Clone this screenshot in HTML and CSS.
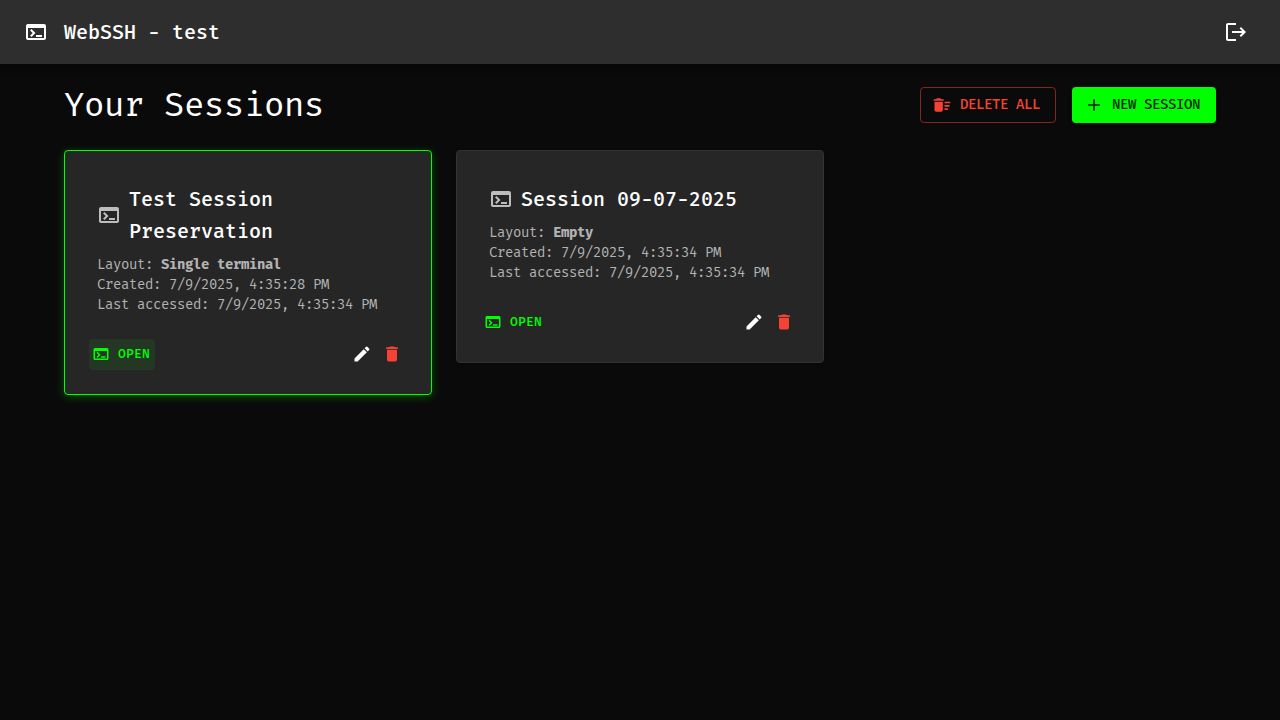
FILE: index.html
```html
<!DOCTYPE html>
<html lang="en">
<head>
<meta charset="utf-8">
<title>WebSSH</title>
<link rel="stylesheet" href="styles.css">
</head>
<body>
<svg class="defs">
  <symbol id="terminal" viewBox="0 0 24 24"><path d="M20 4H4c-1.11 0-2 .9-2 2v12c0 1.1.89 2 2 2h16c1.1 0 2-.9 2-2V6c0-1.1-.89-2-2-2m0 14H4V8h16zm-2-1h-6v-2h6zM7.5 17l-1.41-1.41L8.67 13l-2.59-2.59L7.5 9l4 4z"/></symbol>
  <symbol id="logout" viewBox="0 0 24 24"><path d="m17 7-1.41 1.41L18.17 11H8v2h10.17l-2.58 2.58L17 17l5-5zM4 5h8V3H4c-1.1 0-2 .9-2 2v14c0 1.1.9 2 2 2h8v-2H4z"/></symbol>
  <symbol id="sweep" viewBox="0 0 24 24"><path d="M15 16h4v2h-4zm0-8h7v2h-7zm0 4h6v2h-6zM3 18c0 1.1.9 2 2 2h6c1.1 0 2-.9 2-2V8H3zM14 5h-3l-1-1H6L5 5H2v2h12z"/></symbol>
  <symbol id="add" viewBox="0 0 24 24"><path d="M19 13h-6v6h-2v-6H5v-2h6V5h2v6h6z"/></symbol>
  <symbol id="edit" viewBox="0 0 24 24"><path d="M3 17.25V21h3.75L17.81 9.94l-3.75-3.75zM20.71 7.04c.39-.39.39-1.02 0-1.41l-2.34-2.34a.9959.9959 0 0 0-1.41 0l-1.83 1.83 3.75 3.75z"/></symbol>
  <symbol id="delete" viewBox="0 0 24 24"><path d="M6 19c0 1.1.9 2 2 2h8c1.1 0 2-.9 2-2V7H6zM19 4h-3.5l-1-1h-5l-1 1H5v2h14z"/></symbol>
</svg>
<header class="appbar">
  <svg class="icon"><use href="#terminal"/></svg>
  <div class="brand">WebSSH - test</div>
  <svg class="icon logout"><use href="#logout"/></svg>
</header>
<main class="main">
  <div class="heading">
    <h1 class="page-title">Your Sessions</h1>
    <button class="btn btn-outline"><svg class="icon"><use href="#sweep"/></svg><span>DELETE ALL</span></button>
    <button class="btn btn-solid"><svg class="icon"><use href="#add"/></svg><span>NEW SESSION</span></button>
  </div>
  <div class="grid">
    <article class="card active">
      <div class="card-title"><svg class="icon"><use href="#terminal"/></svg><h2 class="name">Test Session Preservation</h2></div>
      <div class="meta">
        <div>Layout: <strong>Single terminal</strong></div>
        <div>Created: 7/9/2025, 4:35:28 PM</div>
        <div>Last accessed: 7/9/2025, 4:35:34 PM</div>
      </div>
      <div class="actions">
        <button class="open"><svg class="icon"><use href="#terminal"/></svg><span>OPEN</span></button>
        <button class="tool"><svg class="icon"><use href="#edit"/></svg></button>
        <button class="tool danger"><svg class="icon"><use href="#delete"/></svg></button>
      </div>
    </article>
    <article class="card">
      <div class="card-title"><svg class="icon"><use href="#terminal"/></svg><h2 class="name">Session 09-07-2025</h2></div>
      <div class="meta">
        <div>Layout: <strong>Empty</strong></div>
        <div>Created: 7/9/2025, 4:35:34 PM</div>
        <div>Last accessed: 7/9/2025, 4:35:34 PM</div>
      </div>
      <div class="actions">
        <button class="open"><svg class="icon"><use href="#terminal"/></svg><span>OPEN</span></button>
        <button class="tool"><svg class="icon"><use href="#edit"/></svg></button>
        <button class="tool danger"><svg class="icon"><use href="#delete"/></svg></button>
      </div>
    </article>
  </div>
</main>
</body>
</html>
```
FILE: styles.css
```css
* { box-sizing: border-box; }
body {
  margin: 0;
  min-height: 100vh;
  background: #0a0a0a;
  color: #fff;
  font-family: "Fira Mono", "DejaVu Sans Mono", monospace;
}
h1, h2 { margin: 0; }
button {
  border: 0;
  padding: 0;
  background: none;
  color: inherit;
  font: inherit;
  display: flex;
  align-items: center;
}
.defs { display: none; }
.icon { display: block; width: 24px; height: 24px; fill: currentColor; flex: none; }
.appbar {
  display: flex;
  align-items: center;
  height: 64px;
  padding: 0 32px 0 24px;
  background: #2e2e2e;
  box-shadow: 0 2px 4px -1px rgba(0,0,0,.2), 0 4px 5px rgba(0,0,0,.14), 0 1px 10px rgba(0,0,0,.12);
}
.brand {
  flex: 1;
  margin-left: 16px;
  font-size: 20px;
  font-weight: 500;
  line-height: 32px;
}
.main { padding: 23px 64px; }
.heading { display: flex; align-items: center; height: 36px; gap: 16px; }
.page-title {
  flex: 1;
  font-size: 34px;
  font-weight: 400;
  line-height: 42px;
  letter-spacing: -.4px;
}
.btn {
  height: 36px;
  border-radius: 4px;
  font-size: 14px;
  font-weight: 500;
  letter-spacing: -.4px;
}
.btn .icon { width: 20px; height: 20px; margin-right: 8px; }
.btn span { line-height: 24px; }
.btn-outline { width: 136px; padding-left: 11px; border: 1px solid rgba(244,67,54,.5); color: #f44336; }
.btn-solid {
  width: 144px;
  padding-left: 12px;
  background: #0f0;
  color: rgba(0,0,0,.87);
  box-shadow: 0 3px 1px -2px rgba(0,0,0,.2), 0 2px 2px rgba(0,0,0,.14), 0 1px 5px rgba(0,0,0,.12);
}
.grid {
  display: grid;
  grid-template-columns: repeat(3, 1fr);
  gap: 24px;
  align-items: start;
  margin-top: 27px;
}
.card {
  padding: 32px 24px 24px;
  border: 1px solid #333;
  border-radius: 4px;
  background: #262626;
  box-shadow: 0 2px 1px -1px rgba(0,0,0,.2), 0 1px 3px rgba(0,0,0,.12);
}
.card.active { border-color: #0f0; box-shadow: 0 2px 8px rgba(0,255,0,.3); }
.card-title { display: flex; align-items: center; gap: 8px; padding: 0 8px; }
.card-title .icon { color: #bdbdbd; }
.name {
  font-size: 20px;
  font-weight: 500;
  line-height: 32px;
}
.meta {
  padding: 8px 8px 0;
  color: #b3b3b3;
  font-size: 14px;
  line-height: 20px;
  letter-spacing: -.4px;
  white-space: nowrap;
}
.actions { display: flex; align-items: center; height: 30px; margin: 24px 0 1px; }
.open {
  width: 66px;
  height: 31px;
  padding-left: 3px;
  margin-right: auto;
  border-radius: 4px;
  color: #0f0;
  font-size: 13px;
  font-weight: 500;
  letter-spacing: .2px;
}
.open span { padding-bottom: 2px; }
.open .icon { width: 18px; height: 18px; margin-right: 8px; }
.card.active .open { background: #243624; }
.tool { padding: 5px; }
.tool .icon { width: 20px; height: 20px; }
.danger { color: #f44336; }
```
